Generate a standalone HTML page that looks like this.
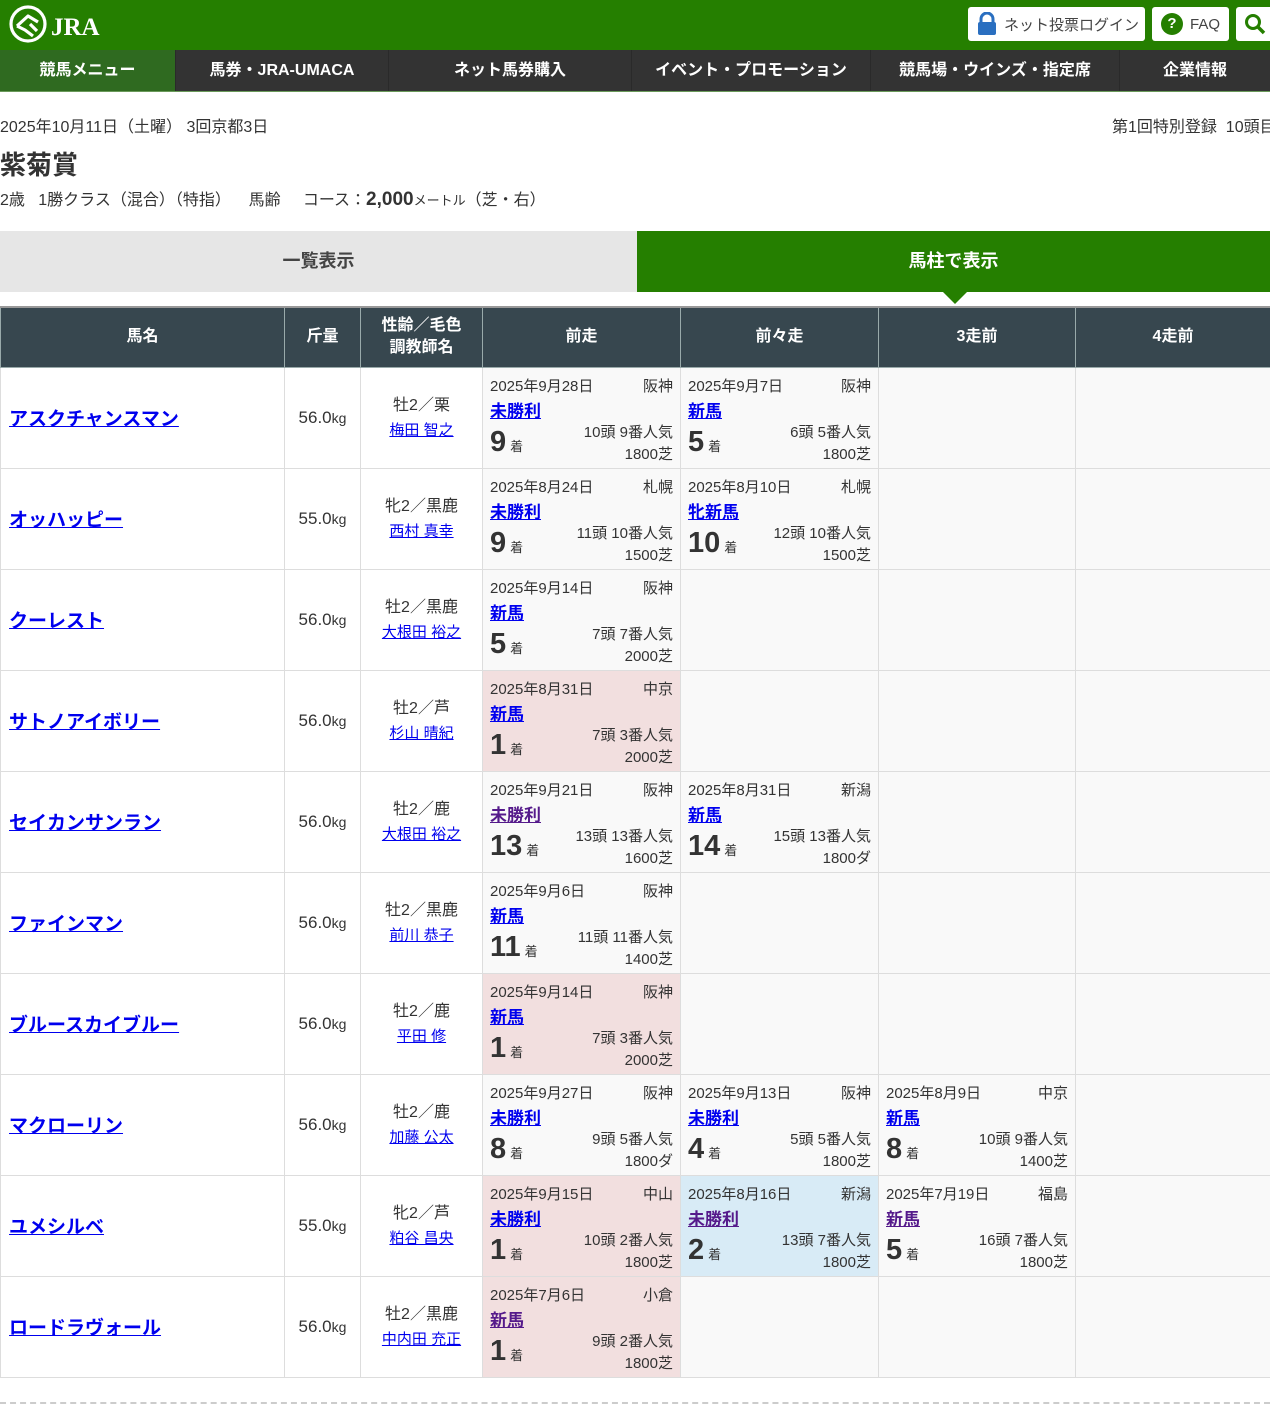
<!DOCTYPE html>
<html><head><meta charset="utf-8">
<style>
*{box-sizing:border-box;margin:0;padding:0}
body{width:1270px;height:1405px;overflow:hidden;background:#fff;font-family:"Liberation Sans","Noto Sans CJK JP",sans-serif;color:#333;position:relative}
.top{height:50px;background:#257f00;position:relative}
.logo{position:absolute;left:8px;top:5px}
.btn{position:absolute;top:7px;height:34px;background:#fff;border-radius:3px;font-size:15px;color:#444;display:flex;align-items:center}
.nav{height:42px;background:#333;display:flex;border-bottom:1px solid #6a9a5a}
.nav div{color:#fff;font-weight:bold;font-size:16px;text-align:center;line-height:41px;border-right:1px solid #2a2a2a}
.t{position:absolute;font-size:16px;white-space:nowrap}
.tabs{position:absolute;top:231px;left:0;width:1270px;height:61px;display:flex}
.tabs div{font-size:18px;font-weight:bold;text-align:center;line-height:61px}
table{position:absolute;top:306px;left:0;border-collapse:collapse;table-layout:fixed;width:1270px;border-top:2px solid #999}
th{background:#37474f;color:#fff;font-size:16px;font-weight:bold;height:60px;border:1px solid #9aa;line-height:22px}
td{border:1px solid #ddd;height:101px;vertical-align:middle;padding:0}
td.n{padding-left:8px;font-size:19px;font-weight:bold}
a{color:#0000ee;text-decoration:underline}
a.v{color:#551a8b}
td.w{text-align:center;font-size:17px}
td.w small{font-size:14px}
td.s{text-align:center;font-size:16px;line-height:25px}
td.s a{font-size:15px}
td.p{background:#f9f9f9;position:relative}
td.pk{background:#f2dfdf}
td.bl{background:#d8ebf6}
.c{position:relative;height:100px}
.d{position:absolute;left:7px;top:7px;font-size:15px}
.pl{position:absolute;right:7px;top:7px;font-size:15px}
.r{position:absolute;left:7px;top:29px;font-size:17px;font-weight:bold}
.k{position:absolute;left:7px;top:58px;font-size:29px;font-weight:bold}
.k span{font-size:13px;margin-left:4px;font-weight:normal}
.h{position:absolute;right:7px;top:54px;font-size:15px;text-align:right;line-height:22px}
</style></head><body>
<div class="top">
<svg class="logo" width="100" height="40" viewBox="0 0 100 40">
<circle cx="20" cy="19" r="17" fill="none" stroke="#fff" stroke-width="3.2"/>
<path d="M9 21 L20 11 L30 17 M9 21 L17 25 L25 31 M22 19 L29 26" fill="none" stroke="#fff" stroke-width="3.2" stroke-linejoin="round"/>
<text x="43" y="30" fill="#fff" font-family="Liberation Serif,serif" font-weight="bold" font-size="25">JRA</text>
</svg>
<div class="btn" style="left:968px;width:177px;padding-left:8px"><svg width="22" height="24" viewBox="0 0 22 24"><path d="M5 11 V7 a6 6 0 0 1 12 0 V11" fill="none" stroke="#2a6fc0" stroke-width="3"/><rect x="2" y="10" width="18" height="13" rx="2" fill="#2a6fc0"/></svg><span style="margin-left:6px">ネット投票ログイン</span></div>
<div class="btn" style="left:1152px;width:77px;padding-left:9px"><span style="display:inline-block;width:22px;height:22px;border-radius:50%;background:#257f00;color:#fff;font-weight:bold;text-align:center;line-height:22px;font-size:15px">?</span><span style="margin-left:7px">FAQ</span></div>
<div class="btn" style="left:1236px;width:40px;padding-left:8px"><svg width="22" height="22" viewBox="0 0 22 22"><circle cx="9" cy="9" r="6.5" fill="none" stroke="#257f00" stroke-width="3"/><path d="M14 14 L20 20" stroke="#257f00" stroke-width="3.5"/></svg></div>
</div>
<div class="nav">
<div style="width:176px;background:#2f6a20">競馬メニュー</div>
<div style="width:213px">馬券・JRA-UMACA</div>
<div style="width:243px">ネット馬券購入</div>
<div style="width:239px">イベント・プロモーション</div>
<div style="width:249px">競馬場・ウインズ・指定席</div>
<div style="width:150px;border:none">企業情報</div>
</div>
<div class="t" style="left:0;top:113px">2025年10月11日（土曜） 3回京都3日</div>
<div class="t" style="left:1112px;top:113px">第1回特別登録&nbsp; 10頭目</div>
<div class="t" style="left:0;top:145px;font-size:26px;font-weight:bold">紫菊賞</div>
<div class="t" style="left:0;top:186px">2歳&nbsp;&nbsp; 1勝クラス（混合）（特指）&nbsp;&nbsp;&nbsp; 馬齢&nbsp;&nbsp;&nbsp;&nbsp; コース：<b style="font-size:19px">2,000</b><span style="font-size:13px">メートル</span>（芝・右）</div>
<div class="tabs"><div style="width:637px;background:#e6e6e6;color:#444">一覧表示</div><div style="width:633px;background:#257f00;color:#fff;position:relative">馬柱で表示<span style="position:absolute;left:306px;top:61px;border-left:12px solid transparent;border-right:12px solid transparent;border-top:12px solid #257f00"></span></div></div>
<table>
<colgroup><col style="width:284px"><col style="width:76px"><col style="width:122px"><col style="width:198px"><col style="width:198px"><col style="width:197px"><col style="width:195px"></colgroup>
<tr><th>馬名</th><th>斤量</th><th>性齢／毛色<br>調教師名</th><th>前走</th><th>前々走</th><th>3走前</th><th>4走前</th></tr>
<tr><td class="n"><a>アスクチャンスマン</a></td><td class="w">56.0<small>kg</small></td><td class="s">牡2／栗<br><a>梅田 智之</a></td>
<td class="p"><div class="c"><span class="d">2025年9月28日</span><span class="pl">阪神</span><a class="r">未勝利</a><span class="k">9<span>着</span></span><span class="h">10頭 9番人気<br>1800芝</span></div></td>
<td class="p"><div class="c"><span class="d">2025年9月7日</span><span class="pl">阪神</span><a class="r">新馬</a><span class="k">5<span>着</span></span><span class="h">6頭 5番人気<br>1800芝</span></div></td>
<td class="p"></td><td class="p"></td></tr>
<tr><td class="n"><a>オッハッピー</a></td><td class="w">55.0<small>kg</small></td><td class="s">牝2／黒鹿<br><a>西村 真幸</a></td>
<td class="p"><div class="c"><span class="d">2025年8月24日</span><span class="pl">札幌</span><a class="r">未勝利</a><span class="k">9<span>着</span></span><span class="h">11頭 10番人気<br>1500芝</span></div></td>
<td class="p"><div class="c"><span class="d">2025年8月10日</span><span class="pl">札幌</span><a class="r">牝新馬</a><span class="k">10<span>着</span></span><span class="h">12頭 10番人気<br>1500芝</span></div></td>
<td class="p"></td><td class="p"></td></tr>
<tr><td class="n"><a>クーレスト</a></td><td class="w">56.0<small>kg</small></td><td class="s">牡2／黒鹿<br><a>大根田 裕之</a></td>
<td class="p"><div class="c"><span class="d">2025年9月14日</span><span class="pl">阪神</span><a class="r">新馬</a><span class="k">5<span>着</span></span><span class="h">7頭 7番人気<br>2000芝</span></div></td>
<td class="p"></td><td class="p"></td><td class="p"></td></tr>
<tr><td class="n"><a>サトノアイボリー</a></td><td class="w">56.0<small>kg</small></td><td class="s">牡2／芦<br><a>杉山 晴紀</a></td>
<td class="p pk"><div class="c"><span class="d">2025年8月31日</span><span class="pl">中京</span><a class="r">新馬</a><span class="k">1<span>着</span></span><span class="h">7頭 3番人気<br>2000芝</span></div></td>
<td class="p"></td><td class="p"></td><td class="p"></td></tr>
<tr><td class="n"><a>セイカンサンラン</a></td><td class="w">56.0<small>kg</small></td><td class="s">牡2／鹿<br><a>大根田 裕之</a></td>
<td class="p"><div class="c"><span class="d">2025年9月21日</span><span class="pl">阪神</span><a class="r v">未勝利</a><span class="k">13<span>着</span></span><span class="h">13頭 13番人気<br>1600芝</span></div></td>
<td class="p"><div class="c"><span class="d">2025年8月31日</span><span class="pl">新潟</span><a class="r">新馬</a><span class="k">14<span>着</span></span><span class="h">15頭 13番人気<br>1800ダ</span></div></td>
<td class="p"></td><td class="p"></td></tr>
<tr><td class="n"><a>ファインマン</a></td><td class="w">56.0<small>kg</small></td><td class="s">牡2／黒鹿<br><a>前川 恭子</a></td>
<td class="p"><div class="c"><span class="d">2025年9月6日</span><span class="pl">阪神</span><a class="r">新馬</a><span class="k">11<span>着</span></span><span class="h">11頭 11番人気<br>1400芝</span></div></td>
<td class="p"></td><td class="p"></td><td class="p"></td></tr>
<tr><td class="n"><a>ブルースカイブルー</a></td><td class="w">56.0<small>kg</small></td><td class="s">牡2／鹿<br><a>平田 修</a></td>
<td class="p pk"><div class="c"><span class="d">2025年9月14日</span><span class="pl">阪神</span><a class="r">新馬</a><span class="k">1<span>着</span></span><span class="h">7頭 3番人気<br>2000芝</span></div></td>
<td class="p"></td><td class="p"></td><td class="p"></td></tr>
<tr><td class="n"><a>マクローリン</a></td><td class="w">56.0<small>kg</small></td><td class="s">牡2／鹿<br><a>加藤 公太</a></td>
<td class="p"><div class="c"><span class="d">2025年9月27日</span><span class="pl">阪神</span><a class="r">未勝利</a><span class="k">8<span>着</span></span><span class="h">9頭 5番人気<br>1800ダ</span></div></td>
<td class="p"><div class="c"><span class="d">2025年9月13日</span><span class="pl">阪神</span><a class="r">未勝利</a><span class="k">4<span>着</span></span><span class="h">5頭 5番人気<br>1800芝</span></div></td>
<td class="p"><div class="c"><span class="d">2025年8月9日</span><span class="pl">中京</span><a class="r">新馬</a><span class="k">8<span>着</span></span><span class="h">10頭 9番人気<br>1400芝</span></div></td>
<td class="p"></td></tr>
<tr><td class="n"><a>ユメシルベ</a></td><td class="w">55.0<small>kg</small></td><td class="s">牝2／芦<br><a>粕谷 昌央</a></td>
<td class="p pk"><div class="c"><span class="d">2025年9月15日</span><span class="pl">中山</span><a class="r">未勝利</a><span class="k">1<span>着</span></span><span class="h">10頭 2番人気<br>1800芝</span></div></td>
<td class="p bl"><div class="c"><span class="d">2025年8月16日</span><span class="pl">新潟</span><a class="r v">未勝利</a><span class="k">2<span>着</span></span><span class="h">13頭 7番人気<br>1800芝</span></div></td>
<td class="p"><div class="c"><span class="d">2025年7月19日</span><span class="pl">福島</span><a class="r v">新馬</a><span class="k">5<span>着</span></span><span class="h">16頭 7番人気<br>1800芝</span></div></td>
<td class="p"></td></tr>
<tr><td class="n"><a>ロードラヴォール</a></td><td class="w">56.0<small>kg</small></td><td class="s">牡2／黒鹿<br><a>中内田 充正</a></td>
<td class="p pk"><div class="c"><span class="d">2025年7月6日</span><span class="pl">小倉</span><a class="r v">新馬</a><span class="k">1<span>着</span></span><span class="h">9頭 2番人気<br>1800芝</span></div></td>
<td class="p"></td><td class="p"></td><td class="p"></td></tr>
</table>
<div style="position:absolute;top:1402px;left:0;width:1270px;border-top:2px dashed #ccc"></div>
</body></html>
